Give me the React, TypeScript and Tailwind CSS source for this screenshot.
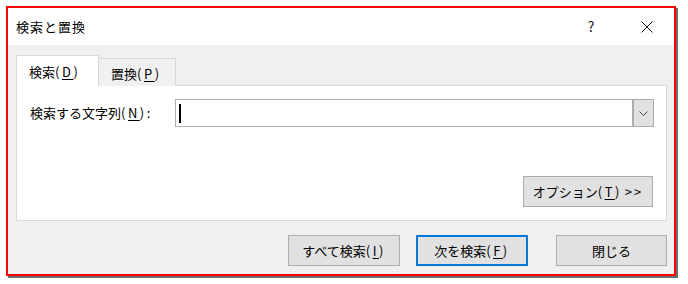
const font = { fontFamily: '"Noto Sans CJK JP", "Noto Sans", sans-serif' };

// mnemonic group like "(D)" — the reference renders these with wide spacing
function Mn({ k, tail = '' }: { k: string, tail?: string }) {
    return (
        <span className="tracking-[2.5px]">
            (<span className="underline underline-offset-2 decoration-1">{k}</span>){tail}
        </span>
    );
}

function Button({ children, width, primary = false }: { children: React.ReactNode, width: string, primary?: boolean }) {
    return (
        <button
            className={`${width} h-[31px] flex items-center justify-center bg-[#e1e1e1] text-[13px] text-black ${primary ? 'border-2 border-[#0078d7]' : 'border border-[#adadad]'}`}
        >
            {children}
        </button>
    );
}

export default function App() {
    return (
        <div className="w-[688px] h-[284px] bg-white pt-[6px] pl-[6px]" style={font}>
            <div className="w-[670px] h-[270px] border-2 border-[#ff0000] shadow-[2px_2px_0_#6d6d6d] flex flex-col">
                {/* title bar */}
                <div className="h-[37px] shrink-0 bg-white flex items-center pl-[8px] text-black">
                    <span className="flex-1 text-[13px] tracking-[1px]">検索と置換</span>
                    <span className="w-[20px] text-center text-[14px] mr-[40px] text-[#222]">?</span>
                    <svg width="12" height="12" viewBox="0 0 12 12" className="mr-[21px]">
                        <path d="M0.5 0.5 L11.5 11.5 M11.5 0.5 L0.5 11.5" stroke="#111" strokeWidth="1" />
                    </svg>
                </div>

                {/* body */}
                <div className="flex-1 bg-[#f0f0f0] pt-[10px] pl-[8px] pr-[7px] flex flex-col">
                    {/* tabs */}
                    <div className="flex items-end h-[31px] relative z-10 -mb-px">
                        <div className="w-[83px] h-[31px] bg-white border border-b-0 border-[#d9d9d9] flex items-center pl-[12px] pt-[2px] text-[13px] text-black">
                            検索<Mn k="D" />
                        </div>
                        <div className="w-[77px] h-[28px] bg-[#f0f0f0] border border-l-0 border-b-0 border-[#d9d9d9] flex items-center pl-[12px] pt-[2px] text-[13px] text-black">
                            置換<Mn k="P" />
                        </div>
                    </div>

                    {/* panel */}
                    <div className="h-[136px] bg-white border border-[#d9d9d9] flex flex-col pl-[13px] pr-[12px] pt-[13px]">
                        <div className="flex items-center h-[28px]">
                            <span className="w-[145px] text-[13px] text-black">
                                検索する文字列<Mn k="N" tail=":" />
                            </span>
                            <div className="flex-1 h-[28px] border border-[#adadad] flex items-stretch">
                                <div className="flex-1 flex items-center pl-[3px]">
                                    <div className="w-[2px] h-[19px] bg-black" />
                                </div>
                                <div className="w-[21px] bg-[#e1e1e1] border-l-2 border-[#adadad] flex items-center justify-center">
                                    <svg width="9" height="5" viewBox="0 0 9 5">
                                        <path d="M0.5 0.5 L4.5 4.5 L8.5 0.5" stroke="#444" strokeWidth="1" fill="none" />
                                    </svg>
                                </div>
                            </div>
                        </div>
                        <div className="flex justify-end mt-[49px] pr-px">
                            <Button width="w-[130px]">
                                オプション<Mn k="T" />&nbsp;<span className="tracking-[2px]">&gt;&gt;</span>
                            </Button>
                        </div>
                    </div>

                    {/* footer buttons */}
                    <div className="flex justify-end mt-[14px]">
                        <Button width="w-[112px]">すべて検索<Mn k="I" /></Button>
                        <div className="w-[16px]" />
                        <Button width="w-[112px]" primary>次を検索<Mn k="F" /></Button>
                        <div className="w-[28px]" />
                        <Button width="w-[111px]">閉じる</Button>
                    </div>
                </div>
            </div>
        </div>
    );
}
